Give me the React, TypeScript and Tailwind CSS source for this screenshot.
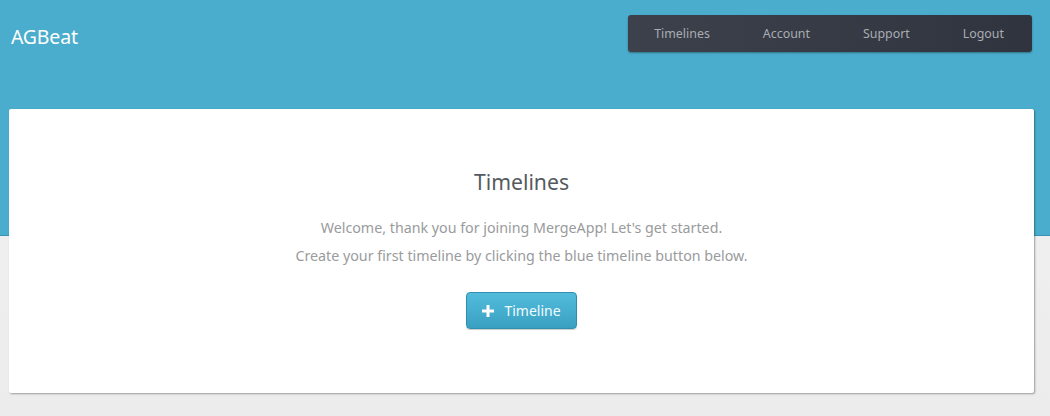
import React from "react";

export default function App() {
  const nav = ["Timelines", "Account", "Support", "Logout"];
  return (
    <div
      className="w-[1050px] h-[416px] overflow-hidden bg-[linear-gradient(to_bottom,#4aadcd_0px,#4aadcd_235px,#3b93b1_235px,#3b93b1_236px,#efefef_236px,#ececec_100%)]"
      style={{ fontFamily: '"Noto Sans", "Open Sans", sans-serif' }}
    >
      <div className="h-[109px] flex items-start justify-between pl-[11px] pr-[18px]">
        <div className="mt-[24px] text-[19.5px] leading-[26px] text-white tracking-[-0.2px]">AGBeat</div>
        <nav className="mt-[15px] h-[37px] flex items-center rounded-[3px] bg-[linear-gradient(to_right,#3c414c,#30343e)] shadow-[0_1px_2px_rgba(0,0,0,0.35)] pl-[26px] pr-[28px] pt-[2px] gap-[53px]">
          {nav.map((n) => (
            <span key={n} className="text-[12.4px] text-[#a9acb2] leading-none">
              {n}
            </span>
          ))}
        </nav>
      </div>
      <div className="ml-[9px] w-[1025px] h-[284px] bg-white rounded-[2px] shadow-[1px_1px_2px_rgba(0,0,0,0.35)] flex flex-col items-center">
        <h1 className="mt-[59px] text-[21.2px] leading-[28px] text-[#555a5e]">Timelines</h1>
        <p className="mt-[18px] text-[14.25px] leading-[28px] text-[#999b9d] text-center">
          Welcome, thank you for joining MergeApp! Let's get started.
          <br />
          Create your first timeline by clicking the blue timeline button below.
        </p>
        <button className="mt-[22px] w-[111px] h-[37px] rounded-[4px] border border-[#2f8fae] bg-[linear-gradient(to_bottom,#52bcdc,#3aa0c1)] shadow-[0_1px_1px_rgba(0,0,0,0.2)] flex items-center justify-center gap-[10px] text-white text-[14px]">
          <svg width="12" height="12" viewBox="0 0 12 12">
            <path d="M4.5 0h3v4.5H12v3H7.5V12h-3V7.5H0v-3h4.5z" fill="#fff" />
          </svg>
          <span className="text-[#f2fbfe]">Timeline</span>
        </button>
      </div>
    </div>
  );
}
